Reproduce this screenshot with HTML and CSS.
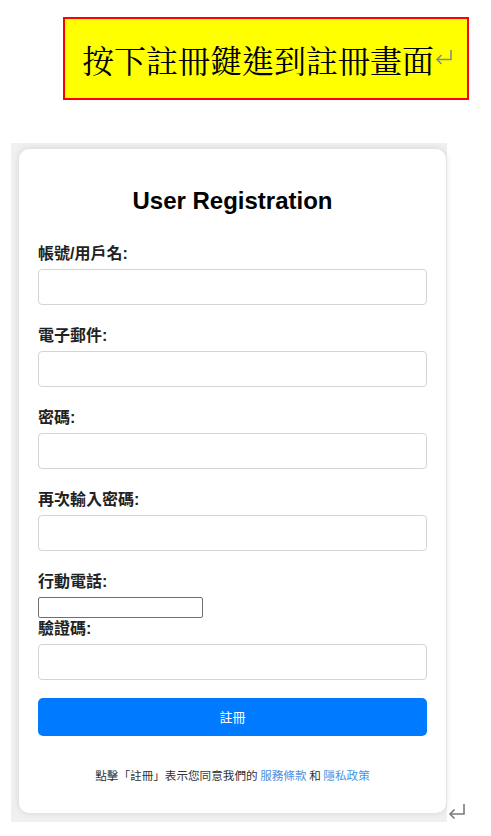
FILE: index.html
```html
<!DOCTYPE html>
<html lang="zh-Hant">
<head>
<meta charset="utf-8">
<title>User Registration</title>
<link rel="stylesheet" href="styles.css">
</head>
<body>
<div class="note">
  <span class="note-text">按下註冊鍵進到註冊畫面</span>
  <svg class="para para-top" width="18" height="16" viewBox="0 0 18 16"><path d="M16 1 V10.5 H2" fill="none" stroke="#8a8a8a" stroke-width="1.6"/><path d="M6.5 6 L2 10.5 L6.5 15" fill="none" stroke="#8a8a8a" stroke-width="1.6"/></svg>
</div>
<div class="shot-row">
  <div class="shot">
    <form class="card">
      <h2 class="title">User Registration</h2>
      <label class="lbl">帳號/用戶名:</label>
      <input class="field" type="text">
      <label class="lbl">電子郵件:</label>
      <input class="field" type="email">
      <label class="lbl">密碼:</label>
      <input class="field" type="password">
      <label class="lbl">再次輸入密碼:</label>
      <input class="field" type="password">
      <label class="lbl">行動電話:</label>
      <input class="plain" type="text">
      <label class="lbl">驗證碼:</label>
      <input class="field field-last" type="text">
      <button class="btn" type="button">註冊</button>
      <p class="terms">點擊「註冊」表示您同意我們的 <a class="link" href="#">服務條款</a> 和 <a class="link" href="#">隱私政策</a></p>
    </form>
  </div>
  <svg class="para para-bottom" width="18" height="17" viewBox="0 0 18 17"><path d="M16 1 V11 H2" fill="none" stroke="#7a7a7a" stroke-width="1.6"/><path d="M6.5 6.5 L2 11 L6.5 15.5" fill="none" stroke="#7a7a7a" stroke-width="1.6"/></svg>
</div>
</body>
</html>
```
FILE: styles.css
```css
* { box-sizing: border-box; }
html, body { margin: 0; padding: 0; background: #fff; }
body {
  width: 491px;
  font-family: "Liberation Sans", Arial, "Noto Sans CJK TC", sans-serif;
}
.note {
  display: flex;
  align-items: center;
  margin: 17px 0 0 63px;
  width: 406px;
  height: 83px;
  border: 2px solid #ff0000;
  background: #ffff00;
  padding-left: 17px;
}
.note-text {
  font-family: "Noto Serif CJK TC", "Noto Sans CJK TC", serif;
  font-size: 32px;
  line-height: 40px;
  color: #000;
  font-weight: 400;
  white-space: nowrap;
  flex: none;
}
.para-top { flex: none; margin-left: 1px; margin-top: -4px; }
.shot-row {
  display: flex;
  align-items: flex-end;
  margin: 43px 0 0 11px;
}
.shot {
  width: 436px;
  background: #f0f0f0;
  padding: 6px 1px 9px 8px;
}
.para-bottom { margin: 0 0 2px 1px; }
.card {
  display: flex;
  flex-direction: column;
  background: #fff;
  border-radius: 10px;
  box-shadow: 0 0 7px rgba(0,0,0,0.12);
  padding: 38px 19px 30px 19px;
}
.title {
  margin: 0 0 28px 0;
  text-align: center;
  font-family: "Liberation Sans", Arial, sans-serif;
  font-size: 24px;
  line-height: 28px;
  font-weight: 700;
  color: #000;
}
.lbl {
  display: block;
  font-family: "Liberation Sans", Arial, "Noto Sans CJK TC", sans-serif;
  font-size: 16px;
  line-height: 22px;
  font-weight: 700;
  color: #222;
  margin-bottom: 4px;
}
.field {
  display: block;
  width: 389px;
  height: 36px;
  border: 1px solid #d4d4d4;
  border-radius: 4px;
  margin: 0 0 20px 0;
  padding: 0 8px;
  background: #fff;
  font-size: 14px;
}
.field-last { margin-bottom: 18px; }
.plain {
  display: block;
  width: 165px;
  height: 21px;
  border: 1px solid #6f6f6f;
  border-radius: 2px;
  margin: 0;
  padding: 1px 2px;
  background: #fff;
}
.btn {
  display: block;
  width: 389px;
  height: 38px;
  border: none;
  border-radius: 5px;
  background: #007bff;
  color: #fff;
  font-family: "Noto Sans CJK TC", sans-serif;
  font-size: 13px;
  line-height: 38px;
  padding: 0;
  margin: 0;
}
.terms {
  margin: 31px 0 0 0;
  text-align: center;
  font-family: "Noto Sans CJK TC", sans-serif;
  font-size: 11.6px;
  line-height: 16px;
  color: #333;
}
.link { color: #4a90e2; text-decoration: none; }
```
